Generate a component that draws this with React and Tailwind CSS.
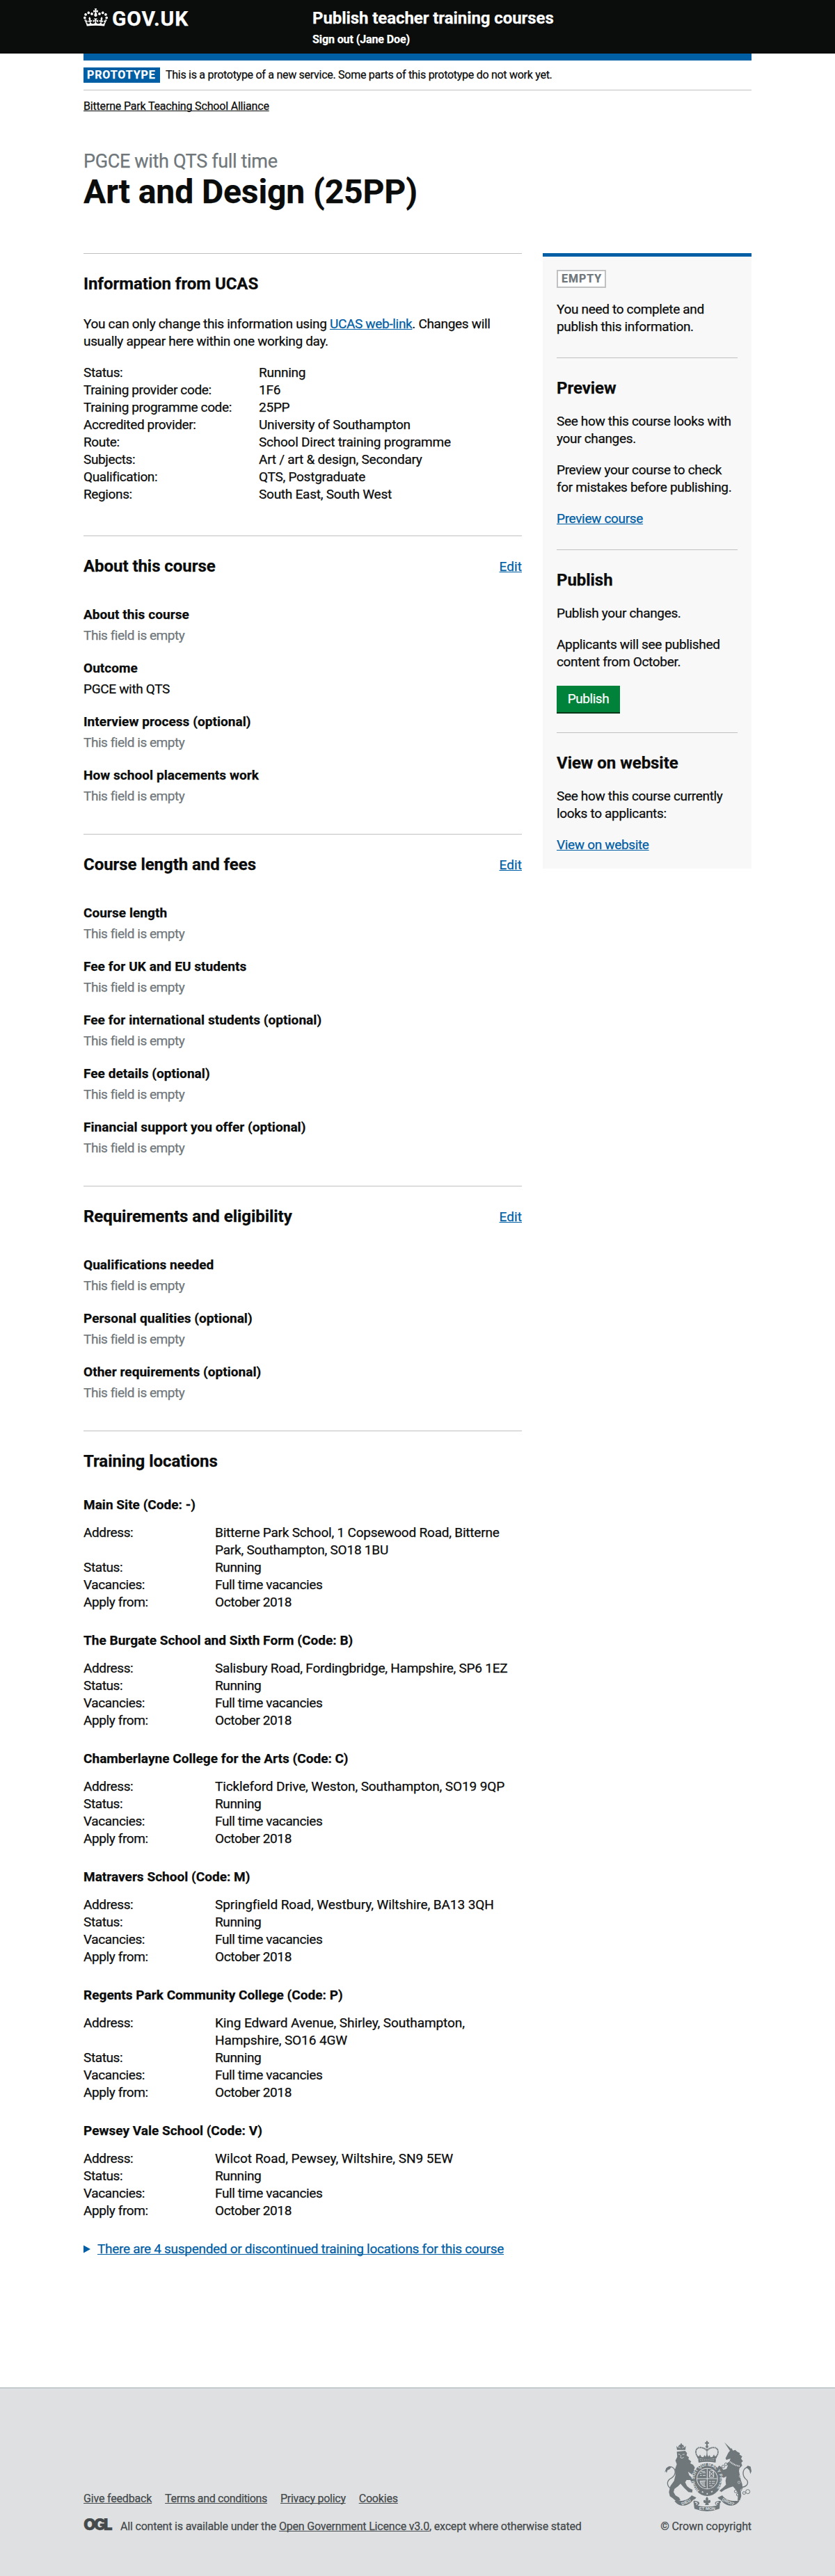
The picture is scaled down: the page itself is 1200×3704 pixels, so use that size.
import React from "react";

const linkClass =
  "text-[#005ea5] underline decoration-1 underline-offset-[1px] [text-decoration-skip-ink:none]";
const footerLinkClass =
  "underline decoration-1 underline-offset-[1px] [text-decoration-skip-ink:none]";

function GovCrown() {
  return (
    <svg width="35" height="26" viewBox="0 0 132 97" fill="#fff" className="mt-3 shrink-0">
      <path d="M25 30.2c3.5 1.5 7.7-.2 9.1-3.7 1.5-3.6-.2-7.8-3.9-9.2-3.6-1.4-7.6.3-9.1 3.9-1.4 3.5.3 7.5 3.9 9zM9 39.5c3.6 1.5 7.8-.2 9.2-3.7 1.5-3.6-.2-7.8-3.9-9.1-3.6-1.5-7.6.2-9.1 3.8-1.4 3.5.3 7.5 3.8 9zM4.4 57.2c3.5 1.5 7.7-.2 9.1-3.8 1.5-3.6-.2-7.7-3.9-9.1-3.5-1.5-7.6.3-9.1 3.8-1.4 3.5.3 7.6 3.9 9.1zm38.3-21.4c3.5 1.5 7.7-.2 9.1-3.8 1.5-3.6-.2-7.7-3.9-9.1-3.6-1.5-7.6.3-9.1 3.8-1.3 3.6.4 7.7 3.9 9.1zm64.4-5.6c-3.6 1.5-7.8-.2-9.1-3.7-1.5-3.6.2-7.8 3.8-9.2 3.6-1.4 7.7.3 9.2 3.9 1.3 3.5-.4 7.5-3.9 9zm15.9 9.3c-3.6 1.5-7.7-.2-9.1-3.7-1.5-3.6.2-7.8 3.7-9.1 3.6-1.5 7.7.2 9.2 3.8 1.5 3.5-.3 7.5-3.8 9zm4.7 17.7c-3.6 1.5-7.8-.2-9.2-3.8-1.5-3.6.2-7.7 3.9-9.1 3.6-1.5 7.7.3 9.2 3.8 1.3 3.5-.4 7.6-3.9 9.1zM89.3 35.8c-3.6 1.5-7.8-.2-9.2-3.8-1.4-3.6.2-7.7 3.9-9.1 3.6-1.5 7.7.3 9.2 3.8 1.4 3.6-.3 7.7-3.9 9.1zM69.7 17.7l8.9 4.7V9.3l-8.9 2.8c-.2-.3-.5-.6-.9-.9L72.4 0H59.6l3.5 11.2c-.3.3-.6.5-.9.9l-8.8-2.8v13.1l8.8-4.7c.3.3.6.7.9.9l-5 15.4v.1c-.2.8-.4 1.6-.4 2.4 0 4.1 3.1 7.5 7 8.1h.2c.3 0 .7.1 1 .1.4 0 .7 0 1-.1h.2c4-.6 7.1-4.1 7.1-8.1 0-.8-.1-1.7-.4-2.4V34l-5.1-15.4c.4-.2.7-.6 1-.9zM66 92.8c16.9 0 32.8 1.1 47.1 3.2 4-16.9 8.9-26.7 14-33.5l-9.6-3.4c1 4.9 1.1 7.2 0 10.2-1.5-1.4-3-4.3-4.2-8.7L108.6 76c2.8-2 5-3.2 7.5-3.3-4.4 9.4-10 11.9-13.6 11.2-4.3-.8-6.3-4.6-5.6-7.9 1-4.7 5.7-5.9 8-.5 4.3-8.7-3-11.4-7.6-8.8 7.1-7.2 7.9-13.5 2.1-21.1-8 6.1-8.1 12.3-4.5 20.8-4.7-5.4-12.1-2.5-9.5 6.2 3.4-5.2 7.9-2 7.2 3.1-.6 4.3-6.4 7.8-13.5 7.2-10.3-.9-10.9-8-11.2-13.8 2.5-.5 7.1 1.8 11 7.3L80.2 60c-4.1 4.4-8 5.3-12.3 5.4 1.4-4.4 8-11.6 8-11.6H55.5s6.4 7.2 7.9 11.6c-4.2-.1-8-1-12.3-5.4l1.4 16.4c3.9-5.5 8.5-7.7 10.9-7.3-.3 5.8-.9 12.8-11.1 13.8-7.2.6-12.9-2.9-13.5-7.2-.7-5 3.8-8.3 7.1-3.1 2.7-8.7-4.6-11.6-9.4-6.2 3.7-8.5 3.6-14.7-4.6-20.8-5.8 7.6-5 13.9 2.2 21.1-4.7-2.6-11.9.1-7.7 8.8 2.3-5.5 7.1-4.2 8.1.5.7 3.3-1.3 7.1-5.7 7.9-3.5.7-9-1.8-13.5-11.2 2.5.1 4.7 1.3 7.5 3.3l-4.7-15.4c-1.2 4.4-2.7 7.2-4.3 8.7-1.1-3-.9-5.3 0-10.2l-9.5 3.4c5 6.9 9.9 16.7 14 33.5 14.8-2.1 30.8-3.2 47.7-3.2z" />
    </svg>
  );
}

function RoyalArms() {
  return (
    <svg width="125" height="103" viewBox="15 25 375 309" fill="#6f777b">
      {/* lion */}
      <path d="M69 66h36l2-18-6 8-5-11-9-3-9 3-6 11-6-7z" />
      <circle cx="87" cy="41" r="3" />
      <path d="M74 58l6-6 2 8M92 60l2-8 5 6" fill="none" stroke="#dee0e2" strokeWidth="2" />
      <path d="M68 74l36-4 8 10-2 10 10 8-2 8 12 10-4 8 12 6 8 12-4 10 6 10-8 16-12-10-12-8 6 16 16 14 4 14-8 8-8-16-16 0-6 10 8 16 12 10 12 6-2 12-16-2-20-20-14-16-10 10-16 12-4 14 8 14 16 10 6 12-18 4-16-14-12-8-4-18 6-26 16-22 6-24-2-26 8-22-6-16 8-16z" />
      <path d="M74 84l8 2M92 86l9-1M82 98l8 4 8-4M86 88l-1 8" stroke="#dee0e2" strokeWidth="2.5" fill="none" />
      <path d="M40 232c-20-18-12-36 4-44 20-12 22-36 6-46-12-8-24 0-28 10" fill="none" stroke="#6f777b" strokeWidth="4" />
      <path d="M15 164l8-20 12-7 9 4-8 9-8 3-4 12-4-7z" />
      {/* unicorn */}
      <path d="M273 33l32 31-8 6z" />
      <path d="M290 78l10-12 4-8 6 11 10-3 8 8 12 6-2 6 12 8-5 10 8 10-7 8 4 12-12 12-2 12 4 18 4 20 6 18 2 20-8 12 2 20-6 18-10 2 2-28-6-16-16-18-14 4-22 10-14 10-8-6 16-14 12-12-2-18 4-18-12 6-8-2-2 14-8-6 2-18-6-12-4-20 6-8 10 6 8 12 14-4 6-14-6-8 12-10 6-12-10 2-8 4-4-8z" />
      <path d="M292 112c14 14 30 22 48 24" fill="none" stroke="#dee0e2" strokeWidth="6" strokeDasharray="4 3" />
      <path d="M342 226c24 4 38-14 28-30-22-16-20-44-2-54" fill="none" stroke="#6f777b" strokeWidth="4" />
      <path d="M364 144l10-10 12 4 4 20-5 12-4-16-8-8z" />
      <g fill="none" stroke="#6f777b" strokeWidth="3">
        <circle cx="280" cy="128" r="6" />
        <circle cx="268" cy="138" r="6" />
        <circle cx="322" cy="245" r="6" />
        <circle cx="331" cy="259" r="6" />
        <circle cx="358" cy="252" r="6" />
        <circle cx="374" cy="246" r="9" />
      </g>
      <g fill="none" stroke="#dee0e2" strokeWidth="2">
        <circle cx="342" cy="180" r="5" />
        <circle cx="336" cy="206" r="5" />
        <circle cx="348" cy="240" r="5" />
      </g>
      {/* crown */}
      <path d="M195 27h6v6h6v6h-6v8h-6v-8h-6v-6h6z" />
      <circle cx="198" cy="52" r="6" />
      <path d="M164 103c-20-20-18-46 4-47 14 0 22 4 30 14 8-10 16-14 30-14 22 1 24 27 4 47" fill="none" stroke="#6f777b" strokeWidth="6" strokeDasharray="0.5 6.5" strokeLinecap="round" />
      <path d="M198 60v30" stroke="#6f777b" strokeWidth="5" strokeDasharray="4 2" />
      <path d="M158 104l-4-14 10 4 4-8 6 10 8 2 6-10 4 8 6-12 6 12 4-8 6 10 8-2 6-10 4 8 10-4-4 14z" />
      <path d="M160 107q38-8 77 0l-2 14q-36-8-73 0z" />
      <path d="M168 112q30-6 61 0" fill="none" stroke="#dee0e2" strokeWidth="2" strokeDasharray="5 4" />
      {/* garter and shield */}
      <ellipse cx="199" cy="194" rx="63" ry="71" />
      <circle cx="199" cy="190" r="46" fill="#dee0e2" />
      <circle cx="199" cy="190" r="43" />
      <path id="garter" d="M166 240a55 58 0 1 1 66 0" fill="none" />
      <text fontFamily="Liberation Sans" fontSize="19" fontWeight="700" fill="#dee0e2">
        <textPath href="#garter" textLength="272" lengthAdjust="spacing">HONI SOIT QUI MAL Y PENSE</textPath>
      </text>
      <path d="M199 147v86M156 190h86" stroke="#dee0e2" strokeWidth="3" />
      <g stroke="#dee0e2" strokeWidth="3" fill="none">
        <path d="M166 167h9m3-2h14M168 176h8m4 0h12M172 159h18M208 159l20 22M226 160l-18 20M211 156h16v28h-18v-26" />
        <path d="M168 200c4 20 14 24 24 24M174 200v14M180 200v20M186 200v24M168 200c8 2 16-2 24 0" />
        <path d="M207 202h9m3 0h14M207 211h8m4 0h12M208 221h14" />
      </g>
      <path d="M176 246l6 3M199 252v6M216 248l6-3" stroke="#dee0e2" strokeWidth="5" />
      {/* fleur */}
      <path d="M198 268c8 8 6 14 3 20 4-8 14-8 12 2-1 6-6 6-9 4l2 10h-16l2-10c-3 2-8 2-9-4-2-10 8-10 12-2-3-6-5-12 3-20z" />
      {/* motto scroll */}
      <path d="M58 286l28 0c22-2 36-10 46-24l20 10c-2 4-8 8-14 10-12 16-28 26-50 24-14-2-24-10-30-20z" />
      <path d="M338 286l-28 0c-22-2-36-10-46-24l-20 10c2 4 8 8 14 10 12 16 28 26 50 24 14-2 24-10 30-20z" />
      <path d="M140 292q-2-8 8-6c20 2 22 12 10 20 26 6 54 6 82 0-12-8-10-18 10-20 10-2 10 6 4 10l-2 24q-54 22-108 0z" />
      <path d="M146 292c12 0 12 6 6 10M248 292c-12 0-12 6-6 10" stroke="#dee0e2" strokeWidth="4" fill="none" />
      <g fontFamily="Liberation Sans" fontSize="18" fontWeight="700" fill="#dee0e2" textAnchor="middle">
        <text transform="translate(110 297) rotate(-24)">DIEU</text>
        <text x="199" y="326">ET MON</text>
        <text transform="translate(287 296) rotate(24)">DROIT</text>
      </g>
    </svg>
  );
}

const Heading = ({ children }) => (
  <h2 className="text-[24px] font-bold leading-[30px] tracking-[-0.05px]">{children}</h2>
);

const ucasRows = [
  ["Status:", "Running"],
  ["Training provider code:", "1F6"],
  ["Training programme code:", "25PP"],
  ["Accredited provider:", "University of Southampton"],
  ["Route:", "School Direct training programme"],
  ["Subjects:", "Art / art & design, Secondary"],
  ["Qualification:", "QTS, Postgraduate"],
  ["Regions:", "South East, South West"],
];

const sections = [
  {
    title: "About this course",
    fields: [
      ["About this course"],
      ["Outcome", "PGCE with QTS"],
      ["Interview process (optional)"],
      ["How school placements work"],
    ],
  },
  {
    title: "Course length and fees",
    fields: [
      ["Course length"],
      ["Fee for UK and EU students"],
      ["Fee for international students (optional)"],
      ["Fee details (optional)"],
      ["Financial support you offer (optional)"],
    ],
  },
  {
    title: "Requirements and eligibility",
    fields: [
      ["Qualifications needed"],
      ["Personal qualities (optional)"],
      ["Other requirements (optional)"],
    ],
  },
];

const locations = [
  {
    name: "Main Site (Code: -)",
    address: ["Bitterne Park School, 1 Copsewood Road, Bitterne", "Park, Southampton, SO18 1BU"],
    tracking: "tracking-[-0.21px]",
  },
  {
    name: "The Burgate School and Sixth Form (Code: B)",
    address: ["Salisbury Road, Fordingbridge, Hampshire, SP6 1EZ"],
    tracking: "tracking-[-0.24px]",
  },
  {
    name: "Chamberlayne College for the Arts (Code: C)",
    address: ["Tickleford Drive, Weston, Southampton, SO19 9QP"],
    tracking: "tracking-[-0.12px]",
  },
  {
    name: "Matravers School (Code: M)",
    address: ["Springfield Road, Westbury, Wiltshire, BA13 3QH"],
    tracking: "tracking-[-0.07px]",
  },
  {
    name: "Regents Park Community College (Code: P)",
    address: ["King Edward Avenue, Shirley, Southampton,", "Hampshire, SO16 4GW"],
    tracking: "tracking-[-0.09px]",
  },
  {
    name: "Pewsey Vale School (Code: V)",
    address: ["Wilcot Road, Pewsey, Wiltshire, SN9 5EW"],
    tracking: "tracking-[-0.02px]",
  },
];

function Section({ title, fields }) {
  return (
    <section className="mt-[42px] border-t border-[#bfc1c3] pt-7">
      <div className="flex items-start justify-between">
        <Heading>{title}</Heading>
        <a className={`${linkClass} mt-[3px] tracking-[0.08px]`}>Edit</a>
      </div>
      <dl className="mt-[42px] flex flex-col gap-[22px]">
        {fields.map(([label, value]) => (
          <div key={label}>
            <dt className="font-bold tracking-[0.06px]">{label}</dt>
            <dd className={value ? "mt-[5px]" : "mt-[5px] tracking-[-0.46px] text-[#6f777b]"}>
              {value || "This field is empty"}
            </dd>
          </div>
        ))}
      </dl>
    </section>
  );
}

function Location({ name, address, tracking }) {
  const rows = [
    ["Status:", "Running"],
    ["Vacancies:", "Full time vacancies"],
    ["Apply from:", "October 2018"],
  ];
  return (
    <div>
      <h3 className="font-bold tracking-[0.03px]">{name}</h3>
      <dl className="mt-[15px] grid grid-cols-[189px_1fr] tracking-[-0.38px]">
        <dt>Address:</dt>
        <dd className={tracking}>
          {address.map((line) => (
            <div key={line} className="whitespace-nowrap">{line}</div>
          ))}
        </dd>
        {rows.map(([k, v]) => (
          <React.Fragment key={k}>
            <dt>{k}</dt>
            <dd>{v}</dd>
          </React.Fragment>
        ))}
      </dl>
    </div>
  );
}

export default function App() {
  return (
    <div className="bg-white font-['Roboto','Liberation_Sans',sans-serif] text-[19px] leading-[25px] tracking-[-0.33px] text-[#0b0c0c] [-webkit-text-stroke:0.25px]">
      <header className="h-[77px] bg-[#0b0c0c] text-white">
        <div className="mx-auto flex w-[960px] items-start font-bold tracking-normal">
          <div className="flex w-[329px] items-start gap-[6px]">
            <GovCrown />
            <span className="mt-[9px] text-[30px] leading-[35px] tracking-[0.9px]">GOV.UK</span>
          </div>
          <div className="pt-[11px]">
            <div className="text-[24px] leading-[30px] tracking-[-0.07px]">Publish teacher training courses</div>
            <div className="mt-[5px] text-[16px] leading-[21px] tracking-[-0.1px]">Sign out (Jane Doe)</div>
          </div>
        </div>
      </header>

      <div className="mx-auto w-[960px]">
        <div className="h-[10px] bg-[#005ea5]" />
        <div className="flex items-start border-b border-[#bfc1c3] py-[10px] text-[16px] leading-[21px]">
          <strong className="h-[22px] w-[110px] bg-[#005ea5] pl-[5px] tracking-[0.9px] text-white">PROTOTYPE</strong>
          <span className="ml-2 tracking-[-0.28px]">
            This is a prototype of a new service. Some parts of this prototype do not work yet.
          </span>
        </div>
        <div className="mt-3 text-[16px] leading-[21px] tracking-[-0.18px]">
          <a className={footerLinkClass}>Bitterne Park Teaching School Alliance</a>
        </div>

        <div className="mt-[53px] text-[27px] leading-8 tracking-[-0.34px] text-[#6f777b]">PGCE with QTS full time</div>
        <h1 className="-mt-px text-[48px] font-bold leading-[57px] tracking-[-0.1px]">Art and Design (25PP)</h1>

        <div className="mt-[60px] flex items-start justify-between">
          <main className="w-[630px]">
            <section className="border-t border-[#bfc1c3] pt-7">
              <Heading>Information from UCAS</Heading>
              <p className="mt-[30px] whitespace-nowrap">
                You can only change this information using <a className={linkClass}>UCAS web-link</a>. Changes will
                <br />
                usually appear here within one working day.
              </p>
              <dl className="mb-[47px] mt-5 grid grid-cols-[252px_1fr] tracking-[-0.24px]">
                {ucasRows.map(([k, v]) => (
                  <React.Fragment key={k}>
                    <dt className="tracking-[-0.37px]">{k}</dt>
                    <dd>{v}</dd>
                  </React.Fragment>
                ))}
              </dl>
            </section>

            <div className="[&>section:first-child]:mt-0">
              {sections.map((s) => (
                <Section key={s.title} {...s} />
              ))}
            </div>

            <section className="mt-[42px] border-t border-[#bfc1c3] pt-7">
              <Heading>Training locations</Heading>
              <div className="mt-[35px] flex flex-col gap-[30px]">
                {locations.map((l) => (
                  <Location key={l.name} {...l} />
                ))}
              </div>
              <div className="mt-[30px] flex items-center">
                <svg width="10" height="12" viewBox="0 0 10 12" className="mr-[10px]" fill="#005ea5">
                  <path d="M0 .5L10 6 0 11.5z" />
                </svg>
                <a className={`${linkClass} tracking-[-0.3px]`}>
                  There are 4 suspended or discontinued training locations for this course
                </a>
              </div>
            </section>
          </main>

          <aside className="w-[300px] border-t-[5px] border-[#005ea5] bg-[#f8f8f8] px-5 pb-[22px] pt-[19px]">
            <strong className="block h-[26px] w-[71px] border-2 border-[#bfc1c3] bg-white pl-[5px] text-[16px] leading-[21px] tracking-[1px] text-[#6f777b]">
              EMPTY
            </strong>
            <p className="mt-[18px]">
              You need to complete and
              <br />
              publish this information.
            </p>
            <div className="mt-8 border-t border-[#bfc1c3] pt-7">
              <Heading>Preview</Heading>
              <p className="mt-5">
                See how this course looks with
                <br />
                your changes.
              </p>
              <p className="mt-5">
                Preview your course to check
                <br />
                for mistakes before publishing.
              </p>
              <p className="mt-5">
                <a className={linkClass}>Preview course</a>
              </p>
            </div>
            <div className="mt-8 border-t border-[#bfc1c3] pt-7">
              <Heading>Publish</Heading>
              <p className="mt-5">Publish your changes.</p>
              <p className="mt-5">
                Applicants will see published
                <br />
                content from October.
              </p>
              <button className="mt-[22px] block h-10 w-[91px] border-b-2 border-[#003618] bg-[#00823b] pb-px text-center tracking-[-0.45px] text-white">
                Publish
              </button>
            </div>
            <div className="mt-[27px] border-t border-[#bfc1c3] pt-7">
              <Heading>View on website</Heading>
              <p className="mt-5">
                See how this course currently
                <br />
                looks to applicants:
              </p>
              <p className="mt-5">
                <a className={linkClass}>View on website</a>
              </p>
            </div>
          </aside>
        </div>
      </div>

      <footer className="mt-[187px] h-[271px] border-t border-[#a1acb2] bg-[#dee0e2] text-[16px] leading-[21px] tracking-[-0.18px] text-[#454a4c]">
        <div className="mx-auto flex w-[960px] justify-between">
          <div className="pt-[148px]">
            <nav className="flex gap-[19px]">
              <a className={footerLinkClass}>Give feedback</a>
              <a className={`${footerLinkClass} tracking-[-0.36px]`}>Terms and conditions</a>
              <a className={`${footerLinkClass} tracking-[-0.27px]`}>Privacy policy</a>
              <a className={footerLinkClass}>Cookies</a>
            </nav>
            <div className="mt-[19px] flex">
              <span className="-mt-[2px] h-[21px] w-[53px] font-['Inter'] text-[23px] font-black tracking-[-3.2px]">
                OGL
              </span>
              <span>
                All content is available under the <a className={footerLinkClass}>Open Government Licence v3.0</a>, except
                where otherwise stated
              </span>
            </div>
          </div>
          <div className="flex flex-col items-end pt-[75px]">
            <RoyalArms />
            <span className="mt-[10px] tracking-[-0.1px]">© Crown copyright</span>
          </div>
        </div>
      </footer>
    </div>
  );
}
